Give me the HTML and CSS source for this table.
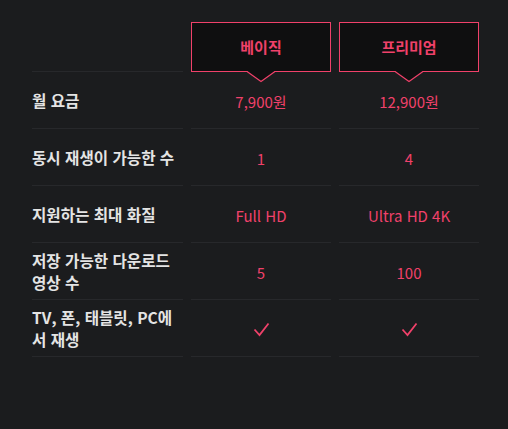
FILE: index.html
```html
<!DOCTYPE html>
<html lang="ko">
<head>
<meta charset="utf-8">
<link rel="stylesheet" href="styles.css">
</head>
<body>
<div class="plans">
  <div class="cell head-empty"></div>
  <div class="plan-head">베이직
    <svg class="arrow" width="28" height="12" viewBox="0 0 28 12"><polygon points="0,0 14,10.5 28,0" fill="#0f0f10"/><polyline points="0,0.5 14,10.5 28,0.5" fill="none" stroke="#f0416a" stroke-width="1.2"/></svg>
  </div>
  <div class="plan-head">프리미엄
    <svg class="arrow" width="28" height="12" viewBox="0 0 28 12"><polygon points="0,0 14,10.5 28,0" fill="#0f0f10"/><polyline points="0,0.5 14,10.5 28,0.5" fill="none" stroke="#f0416a" stroke-width="1.2"/></svg>
  </div>

  <div class="cell label">월 요금</div>
  <div class="cell value">7,900원</div>
  <div class="cell value">12,900원</div>

  <div class="cell label">동시 재생이 가능한 수</div>
  <div class="cell value">1</div>
  <div class="cell value">4</div>

  <div class="cell label">지원하는 최대 화질</div>
  <div class="cell value">Full HD</div>
  <div class="cell value">Ultra HD 4K</div>

  <div class="cell label">저장 가능한 다운로드 영상 수</div>
  <div class="cell value">5</div>
  <div class="cell value">100</div>

  <div class="cell label">TV, 폰, 태블릿, PC에서 재생</div>
  <div class="cell value"><svg class="check" width="17" height="15" viewBox="0 0 17 15"><polyline points="1.5,7.5 6.5,13 15.5,1.5" fill="none" stroke="#f0416a" stroke-width="1.8"/></svg></div>
  <div class="cell value"><svg class="check" width="17" height="15" viewBox="0 0 17 15"><polyline points="1.5,7.5 6.5,13 15.5,1.5" fill="none" stroke="#f0416a" stroke-width="1.8"/></svg></div>
</div>
</body>
</html>
```
FILE: styles.css
```css
html, body {
  margin: 0;
  padding: 0;
  background: #1b1c1e;
}
body {
  width: 508px;
  height: 429px;
  font-family: "Noto Sans CJK KR", "Noto Sans", sans-serif;
}
.plans {
  display: grid;
  grid-template-columns: 151px 140px 140px;
  grid-template-rows: 50px repeat(5, 57px);
  column-gap: 8px;
  padding: 22px 0 0 32px;
}
.cell {
  border-bottom: 1px solid #27282b;
  display: flex;
  align-items: center;
  box-sizing: border-box;
}
.plan-head {
  position: relative;
  box-sizing: border-box;
  border: 1px solid #f0416a;
  background: #0f0f10;
  color: #f0416a;
  font-size: 15px;
  font-weight: 700;
  display: flex;
  align-items: center;
  justify-content: center;
  padding-bottom: 1px;
}
.arrow {
  position: absolute;
  top: 100%;
  left: 50%;
  transform: translateX(-50%);
  display: block;
}
.label {
  color: #e4e4e4;
  font-size: 15.6px;
  font-weight: 700;
  line-height: 22px;
  padding-right: 2px;
}
.value {
  justify-content: center;
  color: #f0416a;
  font-size: 15px;
  font-weight: 400;
  padding-top: 3px;
}
.check {
  display: block;
}
```
